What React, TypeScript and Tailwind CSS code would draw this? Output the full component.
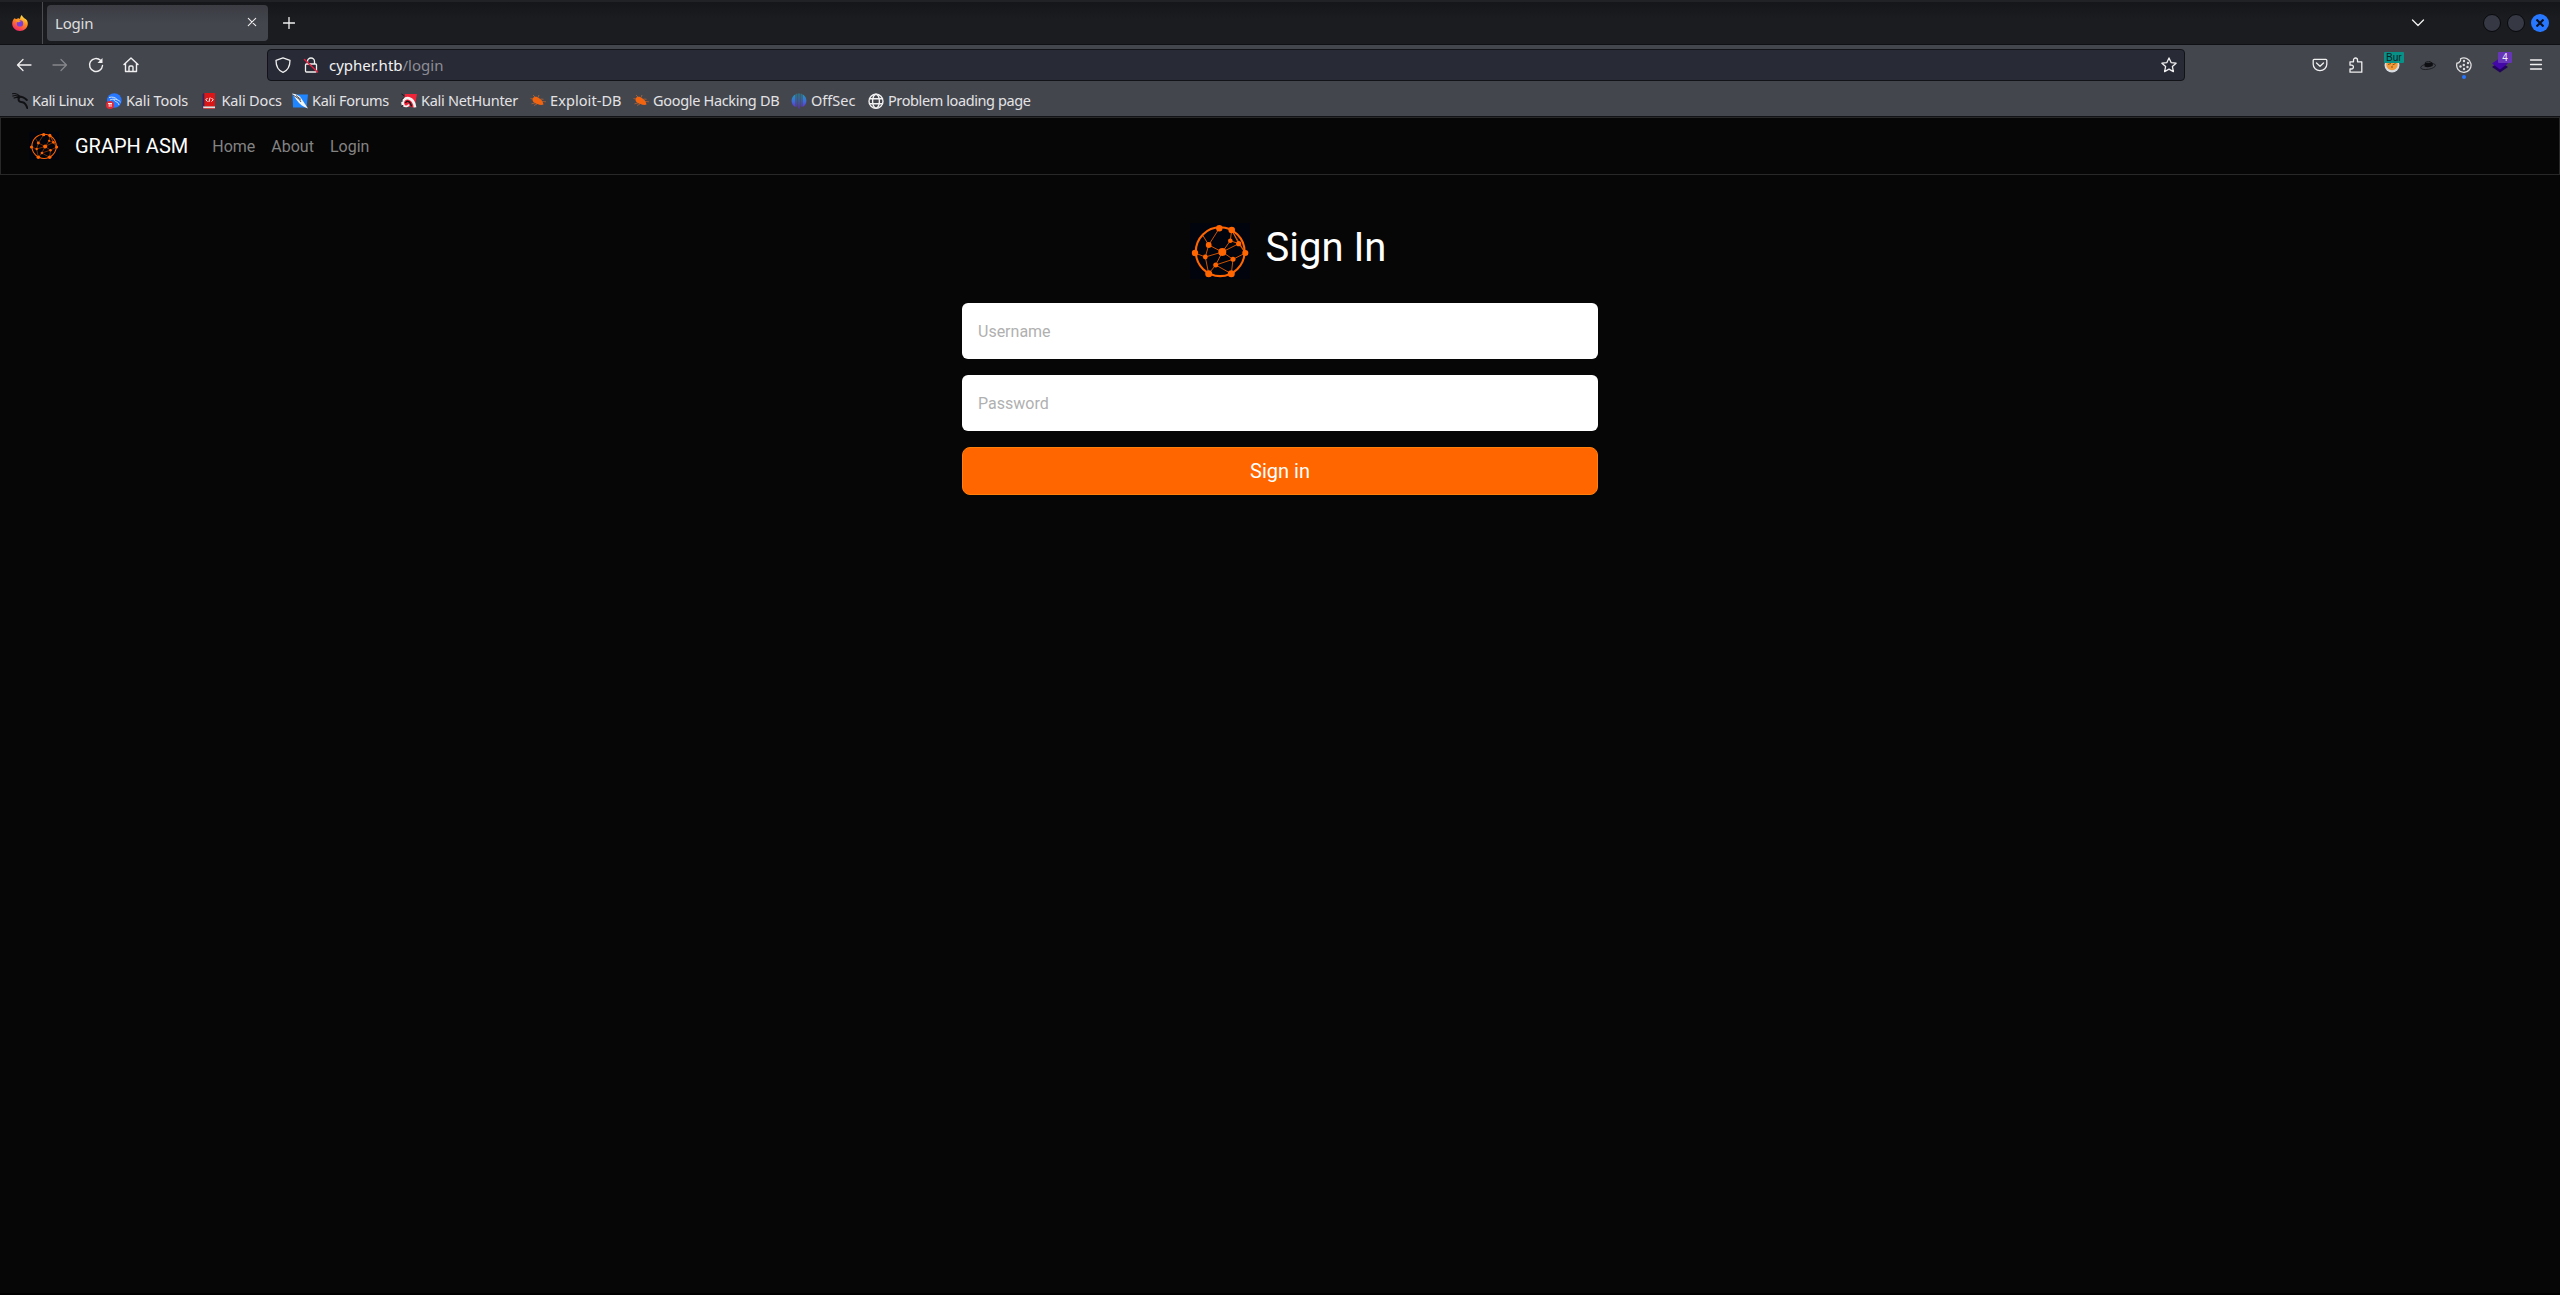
import React from "react";

const nodes: [number, number, number][] = [
  [29.3, 5.3, 3.2], [41.7, 7, 3.3], [40.3, 17.7, 2.3], [48.7, 20.7, 2.6], [18.7, 22, 2.9],
  [5, 30, 3.2], [15.3, 34, 2.4], [32.3, 29, 4], [55.3, 30, 3.1], [43, 36.3, 2.5],
  [25.7, 42, 2.5], [18.7, 50.7, 3.5], [41.3, 50.7, 3.5],
];
const edges: [number, number][] = [
  [0, 4], [4, 7], [4, 6], [5, 6], [6, 7], [6, 11], [7, 2], [7, 3], [7, 9], [7, 10], [10, 9],
  [10, 11], [10, 12], [9, 8], [9, 12], [1, 2], [1, 3], [2, 3], [3, 8], [1, 8],
];

function GraphLogo({ className }: { className: string }) {
  return (
    <svg viewBox="0 0 60 56" className={className}>
      <rect width="60" height="56" fill="#01040c" />
      <g stroke="#ff6500" fill="none">
        <circle cx="30.2" cy="28.7" r="24.4" strokeWidth="2.1" />
        <g strokeWidth="1" strokeOpacity=".8">
          <path d="M12.7 12.2 18.7 22" />
          {edges.map(([a, b], i) => (
            <line key={i} x1={nodes[a][0]} y1={nodes[a][1]} x2={nodes[b][0]} y2={nodes[b][1]} />
          ))}
        </g>
      </g>
      {nodes.map(([x, y, r], i) => (
        <circle key={i} cx={x} cy={y} r={r} fill="#ff6500" />
      ))}
    </svg>
  );
}

const line = { fill: "none", stroke: "#f0f0f0", strokeWidth: 1.3, strokeLinecap: "round", strokeLinejoin: "round" } as const;

function Firefox() {
  return (
    <svg viewBox="0 0 16 16" className="h-4 w-4">
      <defs>
        <linearGradient id="ff" x1=".8" y1="0" x2=".3" y2="1">
          <stop offset="0" stopColor="#fff04a" />
          <stop offset=".45" stopColor="#ff8a1f" />
          <stop offset="1" stopColor="#f5246b" />
        </linearGradient>
      </defs>
      <path d="M2.3 3.2C3 3.7 3.6 3.8 4.6 3.9 6 2.9 7 3 8 4c.2-1.8.7-3 1.9-4 .3 1.8 1.4 2 2.4 3.3C14.8 4.5 16 6.500 15.8 9c-.3 4-3.6 7-7.8 7C3.6 16 .3 12.8.2 8.8.2 6.5 1 4.600 2.3 3.200z" fill="url(#ff)" />
      <circle cx="8" cy="8.4" r="3.2" fill="#7a3fd8" />
      <path d="M3.5 5.5C5 4.800 7.5 5 8.8 6.400 7.3 6.5 6.700 7.3 5.5 7.300z" fill="#ff9a25" />
    </svg>
  );
}

function Dragon() {
  return (
    <svg viewBox="0 0 16 16" className="h-4 w-4" fill="none" stroke="#101114" strokeLinecap="round">
      <path d="M.5.8C3.5 0 6 1 8 3.500M.8 3C3.500 2 6 2.800 8 4.300M2 5C4 4 6 4.300 7.500 5" strokeWidth="1.100" />
      <path d="M6.500 3.500C10 3.500 12.500 4.500 14.800 7M7 4.500C5.500 8.500 8 9 10.500 9.200 13 9.600 14 11 15.300 15" strokeWidth="2" />
    </svg>
  );
}

function Bug() {
  return (
    <svg viewBox="0 0 16 16" className="h-4 w-4">
      <path d="M2.500 5.500C4 3 7 3.200 9.500 5.500c2 1.300 3.500 3 4 6-1.500.8-4 .5-6-.5C4.500 10.500 2 8.500 2.500 5.500z" fill="#f2640f" />
      <path d="M5 4 3 2M8 4.500 9 2M10.500 6l3 .3M12 8.500l4 .3M5 10l-3.500.8M7 11l-3 1.500M2.500 6 .5 5.500" stroke="#c3672f" strokeWidth=".7" />
    </svg>
  );
}

const bookmarks: { label: string; slot: string; icon: React.ReactNode }[] = [
  { label: "Kali Linux", slot: "w-[94px] tracking-[-0.35px]", icon: <Dragon /> },
  {
    label: "Kali Tools", slot: "w-[95.5px] tracking-[-0.15px]", icon: (
      <svg viewBox="0 0 16 16" className="h-4 w-4">
        <circle cx="8.300" cy="7.500" r="7.300" fill="#2777ff" />
        <path d="M3 4.500C6.500 3.500 9.500 4.500 11 6.500M4 7C7 5.500 12 6 14.500 9M8 6.500c.5 3 4 1.500 5 5.500" stroke="#cfe4ff" strokeWidth="1" fill="none" />
        <circle cx="4" cy="11.900" r="4" fill="#e32a35" />
        <path d="M2 10.500h4M3.200 10.500v3.300M5 10.500v3.300" stroke="#fff" strokeWidth=".9" />
      </svg>
    ),
  },
  {
    label: "Kali Docs", slot: "w-[90.5px] tracking-[-0.15px]", icon: (
      <svg viewBox="0 0 16 16" className="h-4 w-4">
        <path d="M.5 1.500Q.5.3 2.500.3V15.700H.5z" fill="#37215c" />
        <path d="M2.500 0H13V13.500H2.500z" fill="#dc1616" />
        <path d="M1 13.500h12v2H1.500z" fill="#eee" />
        <path d="M1.500 15.400H13" stroke="#dc1616" strokeWidth=".7" />
        <path d="M5.500 5 3.800 6.800 5.500 8.600M9.500 5l1.700 1.800L9.500 8.600M8.100 4.500 6.900 9" stroke="#fff" fill="none" strokeWidth="1" />
      </svg>
    ),
  },
  {
    label: "Kali Forums", slot: "w-[109px] tracking-[-0.28px]", icon: (
      <svg viewBox="0 0 16 16" className="h-4 w-4">
        <path d="M.5 1.500H16L14.500 14.500H1z" fill="#1f86ff" />
        <path d="M0 .5C4 1 7 2.500 9 5l3 4.500 4 6C11 13.800 7.500 11 5 7.500z" fill="#f2f5f8" />
        <path d="M1 2 7 6l2 3M4 2.500l5 4" stroke="#26282e" strokeWidth=".8" fill="none" />
      </svg>
    ),
  },
  {
    label: "Kali NetHunter", slot: "w-[129px] tracking-[-0.28px]", icon: (
      <svg viewBox="0 0 16 16" className="h-4 w-4">
        <path d="M4 1H16L13.500 14.500 2 13z" fill="#ef2438" />
        <path d="M2.500 12.500C0 8 4 4.300 8 5.300c4 1 5.500 4.500 6 9" fill="none" stroke="#f6f2f2" strokeWidth="2.800" />
        <path d="M4.500 10C6 7 9.500 8 10.500 13.500" fill="none" stroke="#17171c" strokeWidth="1.400" />
        <path d="M2.500 12.500c2 1.500 4.500 1 5.500-1" fill="none" stroke="#f6f2f2" strokeWidth="1.800" />
        <path d="M.5 1l3 2M.5 14 2 12M.8 9Q.5 6 3 4.500" stroke="#17171c" fill="none" strokeWidth="1" />
      </svg>
    ),
  },
  { label: "Exploit-DB", slot: "w-[103px] tracking-[0.08px]", icon: <Bug /> },
  { label: "Google Hacking DB", slot: "w-[158px] tracking-[-0.32px]", icon: <Bug /> },
  {
    label: "OffSec", slot: "w-[77px]", icon: (
      <svg viewBox="0 0 16 16" className="h-4 w-4">
        <defs>
          <linearGradient id="os" gradientUnits="userSpaceOnUse" x1="0" y1="0" x2="0" y2="16">
            <stop offset="0" stopColor="#16a0b4" />
            <stop offset=".5" stopColor="#3c6fd8" />
            <stop offset="1" stopColor="#6a21d8" />
          </linearGradient>
        </defs>
        <path d="M4.500 1.200V14C2 13 .6 10.500.6 7.800S2 2.500 4.500 1.200zM11.500 1.200V14C14 13 15.400 10.500 15.400 7.800S14 2.500 11.500 1.200zM5.500.7h.8v12.500l-.8.800zM7.500.5h1v15h-1zM9.700.7h.8V14l-.8-.8z" fill="url(#os)" />
      </svg>
    ),
  },
  {
    label: "Problem loading page", slot: "w-[170px] tracking-[-0.4px]", icon: (
      <svg viewBox="0 0 16 16" className="h-4 w-4" {...line} strokeWidth={1.4}>
        <circle cx="8" cy="8.200" r="7" />
        <ellipse cx="8" cy="8.200" rx="3.400" ry="7" />
        <path d="M1.500 5.700h13M1.500 10.700h13" />
      </svg>
    ),
  },
];

function TabStrip() {
  return (
    <div className="flex h-[45px] items-center border-b border-[#0f1013] border-t-2 border-t-[#202226] bg-linear-to-b from-[#15161a] to-[#1b1c20] to-40%">
      <div className="flex h-full w-[43px] items-center border-r border-[#4b4c50] pl-3">
        <Firefox />
      </div>
      <div className="ml-1 flex h-9 w-[221px] items-center justify-between rounded bg-linear-to-b from-[#3b3c42] to-[#44464e] to-50% pr-[11px] pl-2">
        <span className="text-[15px] leading-5 tracking-[-0.2px] text-[#dedede]">Login</span>
        <svg viewBox="0 0 10 10" className="-mt-0.5 h-2.5 w-2.5" {...line} strokeWidth={1.100}><path d="M1.300 1.300l7.400 7.400M8.700 1.300 1.300 8.700" /></svg>
      </div>
      <svg viewBox="0 0 12 12" className="ml-[15px] h-3 w-3" {...line}><path d="M6 .5v11M.5 6h11" /></svg>
      <svg viewBox="0 0 14 8" className="ml-auto h-2 w-3.5" {...line}><path d="M1.500 1 7 6.500 12.500 1" /></svg>
      <div className="mr-[11px] ml-[58px] flex items-center gap-1.5">
        <span className="h-[18px] w-[18px] rounded-full border border-[#08090b] bg-[#363944]" />
        <span className="h-[18px] w-[18px] rounded-full border border-[#08090b] bg-[#363944]" />
        <span className="flex h-[18px] w-[18px] items-center justify-center rounded-full bg-[#2777ff]">
          <svg viewBox="0 0 8 8" className="h-2 w-2" stroke="#0b1020" strokeWidth="2.200"><path d="M.5.5l7 7M7.500.5l-7 7" /></svg>
        </span>
      </div>
    </div>
  );
}

function Toolbar() {
  return (
    <div className="flex h-10 items-center">
      <svg viewBox="0 0 16 16" className="ml-4 h-4 w-4" {...line}><path d="M15 8H1.500M7 2.500 1.500 8 7 13.500" /></svg>
      <svg viewBox="0 0 16 16" className="ml-5 h-4 w-4" {...line} stroke="#85868b"><path d="M1 8h13.500M9 2.500 14.500 8 9 13.500" /></svg>
      <svg viewBox="0 0 16 16" className="ml-5 h-4 w-4" {...line} strokeWidth={1.400}>
        <path d="M12.500 3.300A6.500 6.500 0 1 0 14.500 8.500" /><path d="M9.500 6h5V1z" fill="#f0f0f0" stroke="none" />
      </svg>
      <svg viewBox="0 0 16 16" className="ml-[19px] h-4 w-4" {...line} strokeWidth={1.400}>
        <path d="M1 7.500 8 1l7 6.500M2.500 6.500v8h11v-8M6 14.300v-4Q6 9 7 9h2q1 0 1 1v4.300" />
      </svg>
      <div className="ml-[128px] flex h-8 w-[1918px] items-center rounded border border-[#121318] bg-[#282a35] pr-[7px] pl-[7px]">
        <svg viewBox="0 0 16 16" className="h-4 w-4" {...line}><path d="M8 .8 15 3.300C15 9 13 13.500 8 15.400 3 13.500 1 9 1 3.300z" /></svg>
        <svg viewBox="0 0 16 16" className="ml-3 h-4 w-4" {...line}>
          <path d="M4.500 7V4.500a3.500 3.500 0 0 1 7 0V7M3.500 7h9q1 0 1 1v6q0 1-1 1h-9q-1 0-1-1V8q0-1 1-1z" />
          <path d="M1.500 2.500 14.500 15" stroke="#e2203f" strokeWidth="1.500" />
        </svg>
        <span className="ml-2.5 text-[15px] leading-5 text-[#8d8e95]"><span className="text-[#f2f2f4]">cypher.htb</span>/login</span>
        <svg viewBox="0 0 16 16" className="ml-auto h-4 w-4" {...line}><path d="M8 .9l2.100 4.700 5 .6-3.700 3.400 1 5L8 12.100l-4.400 2.500 1-5L.9 6.200l5-.6z" /></svg>
      </div>
      <div className="mr-4 ml-auto flex items-center gap-5">
        <svg viewBox="0 0 16 16" className="h-4 w-4" {...line}><path d="M1.200 3.300q0-1 1-1h11.600q1 0 1 1v4a6.800 6.300 0 0 1-13.600 0zM4.500 6 8 9.300 11.500 6" /></svg>
        <svg viewBox="0 0 16 16" className="h-4 w-4" {...line}><path d="M2 4.800h3.500V3a2 2 0 0 1 4 0v1.800h4.300V15.200H2V12h1.500a1.800 1.800 0 0 0 0-3.800H2z" /></svg>
        <span className="relative h-4 w-4">
          <svg viewBox="0 0 16 16" className="h-4 w-4">
            <circle cx="8" cy="8" r="7.500" fill="#d7dde2" /><circle cx="8" cy="7.500" r="5.700" fill="#f19a38" />
            <path d="M4 7.500l3-1M8.500 8l3-1.500M7 10h2" stroke="#704015" strokeWidth=".8" />
          </svg>
          <span className="absolute -top-[5px] left-0 h-[11px] w-5 rounded-[1px] bg-[#089087] pl-0.5 font-['Liberation_Sans',sans-serif] text-[10px] leading-[12px] text-[#0b2024]">Bur</span>
        </span>
        <svg viewBox="0 0 16 16" className="h-4 w-4">
          <ellipse cx="8" cy="9.500" rx="7.500" ry="2.800" transform="rotate(-10 8 9)" fill="#44464e" stroke="#191a1e" strokeWidth=".8" />
          <path d="M4.500 9.500C4.500 4.500 6 4 8.500 4.500c2-.9 4-.6 4.500 3.700-2 2.300-6.500 2.300-8.500 1.300z" fill="#0e0f12" />
          <path d="M5.500 5Q9 6 12 4.500" stroke="#55565b" strokeWidth=".7" fill="none" />
        </svg>
        <span className="relative h-4 w-4">
          <svg viewBox="0 0 16 16" className="h-4 w-4" {...line} stroke="#dedede">
            <path d="M4.500 1.800A7.200 7.200 0 1 1 1 6q2 .5 2.700-1.500Q5 4 4.500 1.800z" />
            <g fill="#dedede" stroke="none"><circle cx="8" cy="4" r="1.200" /><circle cx="12" cy="6" r="1.200" /><circle cx="7.800" cy="8" r="1.200" /><circle cx="4.500" cy="9.500" r="1.200" /><circle cx="11.500" cy="10" r="1.200" /><circle cx="8" cy="12" r="1.200" /></g>
          </svg>
          <span className="absolute top-[18px] left-1.5 h-1 w-1 rounded-full bg-[#2878ff]" />
        </span>
        <span className="relative h-4 w-4">
          <svg viewBox="0 0 16 16" className="h-4 w-4"><path d="M8 4.500 16 10l-8 5.500L0 10z" fill="#22045c" /><path d="M8 1l8 5.500L8 12.500 0 6.500z" fill="#4408a8" /></svg>
          <span className="absolute -top-[5px] left-1.5 h-[11px] w-3.5 rounded-[1px] bg-[#6735b8] text-center font-['Liberation_Sans',sans-serif] text-[10px] leading-[12px] text-[#eee]">4</span>
        </span>
        <svg viewBox="0 0 16 16" className="h-4 w-4" {...line}><path d="M2.500 3h11M2.500 7.500h11M2.500 12h11" /></svg>
      </div>
    </div>
  );
}

export default function App() {
  return (
    <div className="flex h-[1295px] w-[2560px] flex-col overflow-hidden border-b-2 border-black bg-[#060606] font-['Roboto',sans-serif] antialiased">
      <header className="shrink-0 font-['Noto_Sans',sans-serif]">
        <TabStrip />
        <div className="h-[72px] border-b border-[#111215] bg-[#44464e]">
          <Toolbar />
          <div className="flex h-[31px] items-center pl-3">
            {bookmarks.map((b) => (
              <div key={b.label} className={`flex shrink-0 items-center gap-1 ${b.slot}`}>
                {b.icon}
                <span className="-mt-0.5 text-[14.5px] leading-5 whitespace-nowrap text-[#e3e3e5]">{b.label}</span>
              </div>
            ))}
          </div>
        </div>
      </header>
      <nav className="flex h-[58px] shrink-0 items-center border border-[#282828] pl-7">
        <GraphLogo className="h-7 w-[30px]" />
        <span className="ml-4 text-xl text-white">GRAPH ASM</span>
        <div className="mt-0.5 ml-6 flex gap-4 text-base text-[#838383]">
          <a>Home</a>
          <a>About</a>
          <a>Login</a>
        </div>
      </nav>
      <main className="mx-auto mt-12 flex w-[636px] flex-col">
        <div className="flex h-14 justify-center pl-4">
          <GraphLogo className="h-14 w-[60px]" />
          <h1 className="mt-px ml-4 text-[40px] leading-[48px] text-white">Sign In</h1>
        </div>
        <input placeholder="Username" className="mt-6 h-14 rounded-md bg-white px-4 text-base placeholder:text-[#b0b0b0]" />
        <input placeholder="Password" className="mt-4 h-14 rounded-md bg-white px-4 text-base placeholder:text-[#b0b0b0]" />
        <button className="mt-4 h-12 rounded-lg border border-[#ff7f0a] bg-[#ff6600] text-xl text-white">Sign in</button>
      </main>
    </div>
  );
}
